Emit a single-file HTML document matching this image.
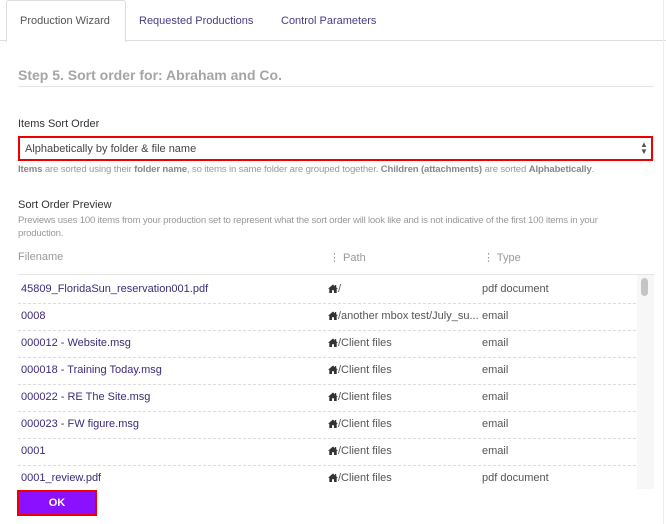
<!DOCTYPE html>
<html><head><style>
body{margin:0;width:666px;height:524px;overflow:hidden;background:#fff;font-family:"Liberation Sans",sans-serif;position:relative}
.a{position:absolute;white-space:nowrap}
.tab{position:absolute;top:1px;height:40px;line-height:40px;font-size:11px;color:#4a3b86}
.row{position:absolute;left:18px;width:618px;height:27px;border-bottom:1px dashed #ddd;font-size:11px;line-height:27px}
.row span{position:absolute}
.f{left:3px;color:#3d2a7a}.p{left:310px;color:#555}.t{left:464px;color:#555}
.h{display:inline-block;width:10px;height:9px;vertical-align:-1px}
</style></head><body>
<svg width="0" height="0" style="position:absolute"><symbol id="hs" viewBox="0 0 10 9"><path d="M5 0.5L0 4.8h1.3V9h2.7V6.3h2V9h2.7V4.8H10L8.2 3.2V1H7v1.2z" fill="#333"/></symbol></svg>
<div class="a" style="left:0;top:40px;width:666px;border-top:1px solid #ddd"></div>
<div class="a" style="left:6px;top:0;width:118px;height:41px;border:1px solid #ddd;border-bottom:none;background:#fff;border-radius:3px 3px 0 0"></div>
<div class="tab" style="left:20px;color:#555">Production Wizard</div>
<div class="tab" style="left:139px">Requested Productions</div>
<div class="tab" style="left:281px">Control Parameters</div>
<div class="a" style="left:18px;top:67px;font-size:14px;font-weight:bold;color:#a5a5a5">Step 5. Sort order for: Abraham and Co.</div>
<div class="a" style="left:18px;top:86px;width:636px;border-top:1px solid #e5e5e5"></div>
<div class="a" style="left:18px;top:118px;font-size:11px;color:#333">Items Sort Order</div>
<div class="a" style="left:18px;top:136px;width:631px;height:21px;border:2px solid #e00;"></div>
<div class="a" style="left:25px;top:143px;font-size:11px;color:#444">Alphabetically by folder &amp; file name</div>
<div class="a" style="left:640px;top:141px;font-size:8px;color:#555;line-height:7px">▲<br>▼</div>
<div class="a" style="left:18px;top:164px;font-size:9.6px;letter-spacing:-0.15px;color:#999"><b style="color:#888">Items</b> are sorted using their <b style="color:#888">folder name</b>, so items in same folder are grouped together. <b style="color:#888">Children (attachments)</b> are sorted <b style="color:#888">Alphabetically</b>.</div>
<div class="a" style="left:18px;top:199px;font-size:11px;color:#333">Sort Order Preview</div>
<div class="a" style="left:18px;top:214px;font-size:9.6px;letter-spacing:-0.2px;color:#999;line-height:13px">Previews uses 100 items from your production set to represent what the sort order will look like and is not indicative of the first 100 items in your<br>production.</div>
<div class="a" style="left:18px;top:251px;font-size:11px;color:#999">Filename</div>
<div class="a" style="left:329px;top:251px;font-size:11px;color:#999">⋮ Path</div>
<div class="a" style="left:483px;top:251px;font-size:11px;color:#999">⋮ Type</div>
<div class="a" style="left:18px;top:274px;width:636px;border-top:1px solid #e5e5e5"></div>
<div class="a" style="left:637px;top:275px;width:17px;height:214px;background:#f7f7f7"></div>
<div class="a" style="left:641px;top:278px;width:7px;height:18px;background:#c5c5c5;border-radius:4px"></div>
<div class="a" style="left:663px;top:0;height:524px;border-left:1px solid #eee"></div>
<div class="row" style="top:276px"><span class="f">45809_FloridaSun_reservation001.pdf</span><span class="p"><svg class="h"><use href="#hs"/></svg>/</span><span class="t">pdf document</span></div>
<div class="row" style="top:303px"><span class="f">0008</span><span class="p"><svg class="h"><use href="#hs"/></svg>/another mbox test/July_su...</span><span class="t">email</span></div>
<div class="row" style="top:330px"><span class="f">000012 - Website.msg</span><span class="p"><svg class="h"><use href="#hs"/></svg>/Client files</span><span class="t">email</span></div>
<div class="row" style="top:357px"><span class="f">000018 - Training Today.msg</span><span class="p"><svg class="h"><use href="#hs"/></svg>/Client files</span><span class="t">email</span></div>
<div class="row" style="top:384px"><span class="f">000022 - RE The Site.msg</span><span class="p"><svg class="h"><use href="#hs"/></svg>/Client files</span><span class="t">email</span></div>
<div class="row" style="top:411px"><span class="f">000023 - FW figure.msg</span><span class="p"><svg class="h"><use href="#hs"/></svg>/Client files</span><span class="t">email</span></div>
<div class="row" style="top:438px"><span class="f">0001</span><span class="p"><svg class="h"><use href="#hs"/></svg>/Client files</span><span class="t">email</span></div>
<div class="row" style="top:465px;border:none"><span class="f">0001_review.pdf</span><span class="p"><svg class="h"><use href="#hs"/></svg>/Client files</span><span class="t">pdf document</span></div>
<div class="a" style="left:0;top:489px;width:640px;height:35px;background:#fff"></div>
<div class="a" style="left:17px;top:490px;width:76px;height:22px;border:2px solid #e00;background:#8a10ff;color:#fff;font-size:11px;font-weight:bold;text-align:center;line-height:22px">OK</div>
</body></html>
